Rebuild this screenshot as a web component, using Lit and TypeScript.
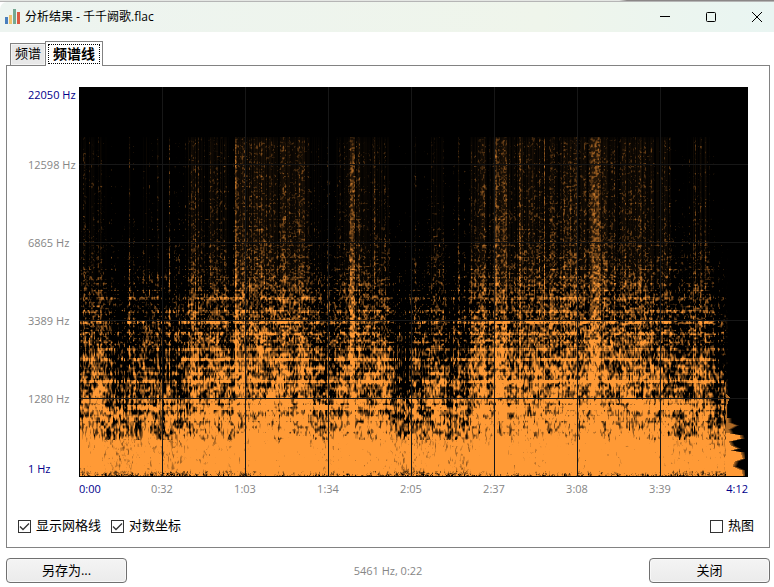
import { LitElement, html, css, svg } from "lit";
import { customElement, state, query, property } from "lit/decorators.js";

const W = 669;
const H = 390;
const GRID_X = [83, 166, 249, 332, 415, 498, 581];
const GRID_Y = [77, 155, 233, 311];

// Loudness over time: [column, energy] steps, linear between points.
const ENERGY: number[][] = [
  [0, 0.36], [30, 0.36], [34, 0.24], [40, 0.1], [44, 0.02], [48, 0.18], [60, 0.2],
  [67, 0.34], [78, 0.34], [83, 0.1], [88, 0.22], [100, 0.2], [105, 0.22], [107, 0.54],
  [140, 0.56], [148, 0.44], [150, 0.2], [155, 0.12], [156, 0.88], [166, 0.76], [190, 0.68],
  [225, 0.64], [232, 0.42], [248, 0.32], [262, 0.42], [265, 0.62], [270, 0.66], [271, 1.05],
  [275, 1.05], [276, 0.56], [290, 0.5], [308, 0.52], [313, 0.32], [318, 0.1], [324, -0.04],
  [329, 0], [332, 0.28], [350, 0.3], [354, 0.42], [366, 0.34], [372, 0.14], [382, 0.28],
  [389, 0.24], [392, 0.54], [400, 0.58], [412, 0.52], [415, 0.78], [426, 0.7], [434, 0.5],
  [439, 0.44], [440, 0.86], [446, 0.74], [460, 0.64], [475, 0.64], [500, 0.68], [510, 0.66],
  [513, 0.86], [515, 1.1], [520, 1.1], [522, 0.76], [535, 0.64], [539, 0.54], [543, 0.78],
  [552, 0.76], [563, 0.62], [588, 0.6], [593, 0.36], [612, 0.3], [616, 0.44], [632, 0.42],
  [636, 0.22], [643, 0.12], [646, 0.02], [669, 0],
];

const SPIKES: number[][] = [
  [21, 0.3], [27, 0.24], [50, 0.3], [67, 0.34], [90, 0.3], [109, 0.2], [119, 0.34], [131, 0.3],
  [133, 0.24], [156, 0.24], [161, 0.16], [178, 0.26], [295, 0.2], [336, 0.3], [352, 0.4], [374, 0.34],
  [379, 0.34], [405, 0.34], [417, 0.2], [465, 0.32], [545, 0.18], [551, 0.18], [561, 0.26],
  [614, 0.36], [616, 0.3], [626, 0.34], [647, 0.4],
];

// Overall level at each height of the picture.
const LEVEL: number[][] = [
  [50, -0.34], [77, -0.3], [130, -0.26], [155, -0.22], [185, -0.14], [205, -0.06], [225, 0],
  [245, 0.08], [270, 0.2], [295, 0.36], [311, 0.48], [330, 0.68], [345, 0.9], [358, 1.32],
  [380, 1.46], [389, 1],
];

// Sustained pitches: [row, half height, strength].
const PITCHES: number[][] = [
  [104, 0, 0.08], [116, 0, 0.08], [132, 0, 0.1], [142, 0, 0.1],
  [154, 0, 0.14], [158, 0, 0.2], [170, 0, 0.14], [182, 0, 0.2], [190, 0, 0.18], [197, 1, 0.16],
  [203, 0, 0.2], [211, 1, 0.3], [224, 1, 0.34], [235, 1, 0.56], [246, 1, 0.36], [254, 1, 0.2],
  [262, 1, 0.36], [272, 1, 0.56], [280, 1, 0.2], [286, 1, 0.28], [294, 1, 0.56], [302, 1, 0.16],
  [313, 2, 0.34], [320, 2, 0.5], [331, 2, 0.24],
];

// How far the closing chord rings on: [row, last column].
const TAIL: number[][] = [
  [305, 646], [310, 650], [320, 647], [335, 648], [338, 655], [342, 648], [346, 650], [348, 660],
  [351, 661], [354, 649], [358, 651], [361, 657], [363, 651], [365, 661], [371, 663], [374, 655],
  [379, 653], [383, 662], [387, 663],
];

const curve = (pts: number[][], p: number): number => {
  if (p <= pts[0][0]) return pts[0][1];
  for (let i = 1; i < pts.length; i++) {
    if (p <= pts[i][0]) {
      const [a, av] = pts[i - 1];
      const [b, bv] = pts[i];
      return av + ((bv - av) * (p - a)) / (b - a);
    }
  }
  return pts[pts.length - 1][1];
};

const hash = (x: number, y: number, seed = 0): number => {
  let h = Math.imul(x | 0, 374761393) ^ Math.imul(y | 0, 668265263) ^ Math.imul(seed + 11, 1442695041);
  h = Math.imul(h ^ (h >>> 13), 1274126177);
  h = Math.imul(h ^ (h >>> 15), 2246822519);
  return ((h ^ (h >>> 16)) >>> 0) / 4294967296;
};

const smooth = (x: number, y: number, seed: number): number => {
  const xi = Math.floor(x);
  const yi = Math.floor(y);
  const fx = x - xi;
  const fy = y - yi;
  const top = hash(xi, yi, seed) * (1 - fx) + hash(xi + 1, yi, seed) * fx;
  const low = hash(xi, yi + 1, seed) * (1 - fx) + hash(xi + 1, yi + 1, seed) * fx;
  return top * (1 - fy) + low * fy;
};

@customElement("spectrum-plot")
class SpectrumPlot extends LitElement {
  @property({ type: Boolean }) grid = true;
  @query("canvas") canvas!: HTMLCanvasElement;

  static styles = css`
    :host { display: block; min-width: 0; }
    .plot { display: block; width: 100%; height: auto; background: #000; }
  `;

  updated() {
    const ctx = this.canvas.getContext("2d")!;
    const img = ctx.createImageData(W, H);
    const energy: number[] = [];
    for (let x = 0; x < W; x++) {
      const base = curve(ENERGY, x);
      let e = base + (hash(x, 3, 5) - 0.5) * 0.36 + (smooth(x / 4, 0, 6) - 0.5) * 0.26;
      if (base > 1) e = base;
      for (const [sx, s] of SPIKES) if (sx === x) e += s;
      energy.push(e);
    }
    // Rows of noise grow taller towards the low frequencies.
    let fineRow = 0;
    let noteRow = 0;
    for (let y = 0; y < H; y++) {
      const level = curve(LEVEL, y);
      const depth = Math.min(1, Math.max(0, (y - 150) / 150));
      const last = curve(TAIL, y);
      fineRow += y < 200 ? 0.7 : y < 260 ? 0.5 : 0.36;
      noteRow += 1 / (2.5 + depth * 3);
      let pitch = 0;
      for (const [py, half, s] of PITCHES) if (Math.abs(y - py) <= half) pitch = Math.max(pitch, s);
      for (let x = 0; x < W; x++) {
        let v = 0;
        if (y >= 50 && y < 389 && x > 0) {
          const fine = smooth(x * 0.8, fineRow, 1);
          const shortNotes = smooth(x / 2, noteRow, 2);
          const longNotes = smooth(x / 5, noteRow, 3);
          const notes = shortNotes * (1 - depth) + longNotes * depth;
          const e = energy[x];
          const reach = 0.66 + Math.min(1, Math.max(0, (y - 160) / 80)) * 0.34;
          v = level + (e - 0.42) * reach + (fine - 0.5) * (0.86 + depth * 0.7) +
            (notes - 0.5) * (0.36 + depth * 0.75);
          if (e > 0.08) v += pitch * smooth(x / 7, noteRow, 7) * 1.7;
          if (y < 330) v += (hash(x, 0, 8) - 0.5) * 0.24;
          if (y > 352) v = Math.max(v, 1.36 - (1 - smooth(x * 0.7, y / 3, 9)) * 0.9);
          if (y > 383) v -= hash(x, y, 4) * (y - 382) * 0.16;
          if (x > 646) {
            if (y > 304 && x <= last) v = y > 345 ? 1 : 0.7;
            else v = x < 649 && y < 330 ? v * 0.2 : y > 330 ? Math.max(0, 0.75 - (x - last) * 0.16) : 0;
            if (x > 665) v = 0;
          }
          if (y < 200) v = Math.max(v, 0) * 0.95 + Math.min(0.4, Math.max(0, e - 0.42) * 0.2);
          if (y < 56) v *= 0.6 + (y - 50) * 0.07;
        }
        v = Math.min(1, Math.max(0, v));
        const i = (y * W + x) * 4;
        img.data[i] = 255 * v;
        img.data[i + 1] = 154 * v;
        img.data[i + 2] = 54 * v;
        img.data[i + 3] = 255;
      }
    }
    ctx.putImageData(img, 0, 0);
    if (this.grid) {
      ctx.fillStyle = "#171717";
      for (const x of GRID_X) ctx.fillRect(x, 0, 1, H);
      for (const y of GRID_Y) ctx.fillRect(0, y, W, 1);
    }
  }

  render() {
    return html`<canvas class="plot" width=${W} height=${H} role="img" aria-label="频谱线"></canvas>`;
  }
}

@customElement("tick-box")
class TickBox extends LitElement {
  @property() label = "";
  @property({ type: Boolean }) checked = false;

  static styles = css`
    .row { display: flex; align-items: center; gap: 5px; font-size: 13px; line-height: 18px; color: #000; }
    .box { display: grid; width: 13px; height: 13px; margin-top: 2px; }
    .input { grid-area: 1 / 1; appearance: none; box-sizing: border-box; width: 13px; height: 13px; margin: 0; border: 1px solid #333; background: #fff; }
    .mark { grid-area: 1 / 1; width: 13px; height: 13px; pointer-events: none; visibility: hidden; }
    .input:checked + .mark { visibility: visible; }
  `;

  private toggle(e: Event) {
    this.checked = (e.target as HTMLInputElement).checked;
    this.dispatchEvent(new CustomEvent("toggle-box", { detail: this.checked }));
  }

  render() {
    return html`<label class="row">
      <span class="box">
        <input class="input" type="checkbox" .checked=${this.checked} @change=${this.toggle} />
        <svg class="mark" viewBox="0 0 13 13" fill="none" stroke="#333" stroke-width="1.3">
          <path d="M2 6.5 5 9.5 11 3.5" />
        </svg>
      </span>
      <span>${this.label}</span>
    </label>`;
  }
}

@customElement("app-root")
class AppRoot extends LitElement {
  @state() tab = 1;
  @state() grid = true;

  static styles = css`
    :host { display: block; background: #fff; color: #000; font: 12px/16px "Open Sans", "Noto Sans CJK SC", sans-serif; }
    .top { height: 2px; background: linear-gradient(90deg, #e4e6e3 0 80%, #8b8787 81%); border-bottom: 1px solid #b5b5b5; box-sizing: border-box; }
    .title { display: flex; align-items: center; height: 30px; padding-left: 5px; border-radius: 7px 0 0 0; background: linear-gradient(90deg, #edf4f0, #eff5eb 70%, #e9f5f2); }
    .logo { width: 16px; height: 16px; margin-right: 4px; }
    .name { flex: 1; margin: 0; font-size: 12px; font-weight: 400; }
    .win { width: 46px; height: 30px; padding: 0; border: 0; background: none; display: grid; place-items: center; }
    .win:last-child { width: 40px; padding-left: 6px; box-sizing: border-box; }
    .glyph { width: 12px; height: 12px; }
    .body { padding: 9px 4px 4px 6px; }
    .tabs { display: flex; align-items: flex-end; padding-left: 4px; }
    .tab { font: 13px/18px "Open Sans", "Noto Sans CJK SC", sans-serif; border: 1px solid #828282; border-bottom: 0; padding: 0 4px 3px; height: 22px; background: #e8e8e8; color: #000; box-shadow: inset 0 0 0 1px #f4f4f4; white-space: nowrap; }
    .tab.on { height: 25px; margin: 0 0 -1px -1px; padding: 2px; font-size: 14px; font-weight: 700; background: #fff; box-shadow: none; position: relative; }
    .focus { display: block; padding: 0 4px; height: 18px; border: 1px dotted #000; }
    .panel { border: 1px solid #828282; padding: 21px 21px 12px; }
    .chart { display: grid; grid-template-columns: 51px 1fr; }
    .freq { display: grid; grid-template-rows: repeat(5, 1fr); font-size: 11px; color: #868686; white-space: nowrap; }
    .hz { grid-column: 1; margin-top: -8px; height: 16px; }
    .hz.first { margin-top: 0; color: #00008b; }
    .hz.last { grid-row: 5; align-self: end; margin: 0; color: #00008b; }
    .time { grid-column: 2; display: grid; grid-template-columns: repeat(15, 83fr) 93fr; padding-top: 4px; font-size: 11px; color: #868686; text-align: center; }
    .sec { grid-row: 1; }
    .sec.edge { color: #00008b; text-align: left; }
    .sec.end { text-align: right; }
    .options { display: flex; gap: 10px; margin: 19px -6px 0 -10px; padding-bottom: 1px; }
    .spacer { flex: 1; }
    .foot { display: grid; grid-template-columns: 1fr auto 1fr; align-items: center; margin-top: 10px; }
    .btn { box-sizing: border-box; width: 121px; height: 25px; padding: 0 0 2px; border: 1px solid #707070; border-radius: 4px; background: linear-gradient(#f4f4f4, #ebebeb); box-shadow: inset 0 0 0 1px #f8f8f8; font: 13px/20px "Open Sans", "Noto Sans CJK SC", sans-serif; color: #000; }
    .btn.close { justify-self: end; }
    .status { font-size: 11px; color: #868686; }
  `;

  private glyph(d: string) {
    return html`<svg class="glyph" viewBox="0 0 12 12" fill="none" stroke="#000" stroke-width="1">${svg`<path d=${d} />`}</svg>`;
  }

  render() {
    const hz = ["22050 Hz", "12598 Hz", "6865 Hz", "3389 Hz", "1280 Hz"];
    const secs = ["0:32", "1:03", "1:34", "2:05", "2:37", "3:08", "3:39"];
    return html`
      <div class="top"></div>
      <header class="title">
        <svg class="logo" viewBox="0 0 16 16">
          <path fill="#4a7fbd" d="M0 8h3v7H0z" />
          <path fill="#efc36d" d="M4 6h3v9H4z" />
          <path fill="#75a993" d="M8 0h3v15H8z" />
          <path fill="#da5a43" d="M12 3h3v12h-3z" />
        </svg>
        <h1 class="name">分析结果 - 千千阙歌.flac</h1>
        <button class="win" aria-label="最小化">${this.glyph("M1 5.5H11")}</button>
        <button class="win" aria-label="最大化">${this.glyph("M2.5 1.5h7q1 0 1 1v7q0 1-1 1h-7q-1 0-1-1v-7q0-1 1-1z")}</button>
        <button class="win" aria-label="关闭窗口">${this.glyph("M1 1 11 11M11 1 1 11")}</button>
      </header>
      <main class="body">
        <div class="tabs" role="tablist">
          ${["频谱", "频谱线"].map((t, i) => html`<button
            class="tab ${i === this.tab ? "on" : ""}" role="tab" aria-selected=${i === this.tab}
            @click=${() => (this.tab = i)}>${i === this.tab ? html`<span class="focus">${t}</span>` : t}</button>`)}
        </div>
        <section class="panel">
          <div class="chart">
            <div class="freq">
              ${hz.map((t, i) => html`<span class="hz ${i ? "" : "first"}" style="grid-row:${i + 1}">${t}</span>`)}
              <span class="hz last">1 Hz</span>
            </div>
            <spectrum-plot .grid=${this.grid}></spectrum-plot>
            <div class="time">
              <span class="sec edge">0:00</span>
              ${secs.map((t, i) => html`<span class="sec" style="grid-column:${2 * i + 2} / span 2">${t}</span>`)}
              <span class="sec edge end">4:12</span>
            </div>
          </div>
          <div class="options">
            <tick-box label="显示网格线" checked @toggle-box=${(e: CustomEvent) => (this.grid = e.detail)}></tick-box>
            <tick-box label="对数坐标" checked></tick-box>
            <span class="spacer"></span>
            <tick-box label="热图"></tick-box>
          </div>
        </section>
        <footer class="foot">
          <button class="btn">另存为...</button>
          <span class="status">5461 Hz, 0:22</span>
          <button class="btn close">关闭</button>
        </footer>
      </main>
    `;
  }
}
